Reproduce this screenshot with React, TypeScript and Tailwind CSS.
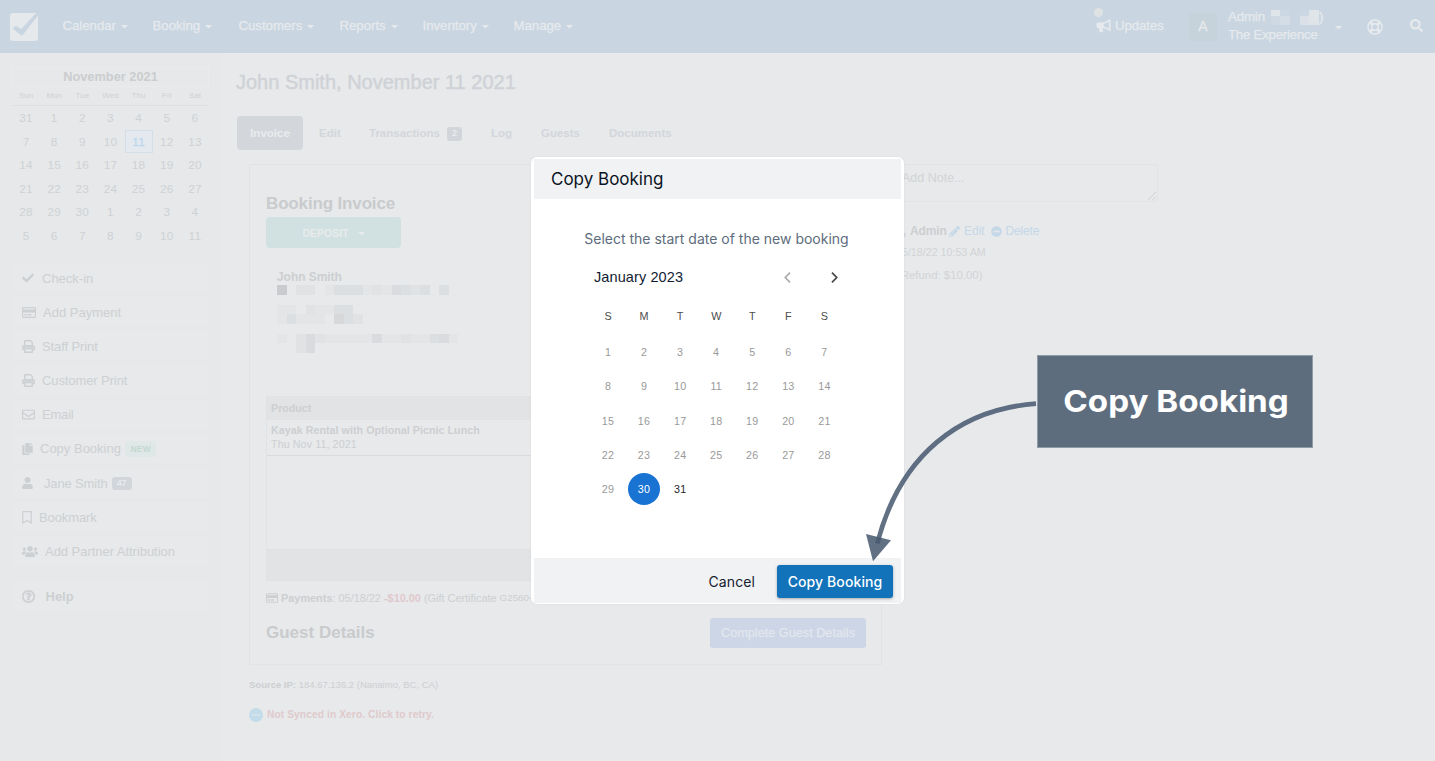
import type { ReactNode } from "react";
import clsx from "clsx";
import {
  FaCheck,
  FaCopy,
  FaMinusCircle,
  FaPencilAlt,
  FaRegBookmark,
  FaRegCreditCard,
  FaRegEnvelope,
  FaRegLifeRing,
  FaRegQuestionCircle,
  FaSearch,
  FaUser,
  FaUsers,
} from "react-icons/fa";

const NAV = [
  { label: "Calendar", width: "w-[90px]" },
  { label: "Booking", width: "w-[86px]" },
  { label: "Customers", width: "w-[101px]" },
  { label: "Reports", width: "w-[83px]" },
  { label: "Inventory", width: "w-[91px]" },
  { label: "Manage", width: "w-[80px]" },
];

const MINI_WEEKDAYS = ["Sun", "Mon", "Tue", "Wed", "Thu", "Fri", "Sat"];
const MINI_DAYS = [
  31, 1, 2, 3, 4, 5, 6, 7, 8, 9, 10, 11, 12, 13, 14, 15, 16, 17, 18, 19, 20, 21,
  22, 23, 24, 25, 26, 27, 28, 29, 30, 1, 2, 3, 4, 5, 6, 7, 8, 9, 10, 11,
];

const WEEKDAYS = ["S", "M", "T", "W", "T", "F", "S"];
const DAYS = Array.from({ length: 31 }, (_, i) => i + 1);

// Redacted contact lines, one opacity (0-9) per block
const REDACTED = [
  { rows: ["902201333121432303"], className: "mt-0" },
  { rows: ["110211330", "131110532"], className: "mt-[10px]" },
  { rows: ["1024211111411211341", "0024"], className: "mt-[10px]" },
];

function Caret({ className }: { className?: string }) {
  return (
    <svg viewBox="0 0 8 4" className={clsx("h-[3.5px] w-[7px]", className)} fill="currentColor">
      <path d="M0 0h8L4 4z" />
    </svg>
  );
}

function LogoIcon() {
  return (
    <svg viewBox="0 0 28 28" className="h-7 w-7">
      <rect width="28" height="28" rx="3" fill="#e6e9eb" />
      <path d="M2.5 15.5l3.3-2.7 5.500 3.200L25 1l3-1v2.500L12 23z" fill="#c9d6e2" />
    </svg>
  );
}

function MegaphoneIcon() {
  return (
    <svg viewBox="0 0 15 14" className="h-3.5 w-[15px]" fill="none" stroke="currentColor" strokeWidth="1.5" strokeLinejoin="round">
      <path d="M7 4.2C10 4 12 2.6 13.8 1.2v10.2C12 9.6 10 8.5 7 8.3" />
      <path d="M2.2 4.2H7v4.100H2.200a1 1 0 0 1-1-1V5.200a1 1 0 0 1 1-1zM3.600 8.400l.6 4.200h2L5.800 8.400z" fill="currentColor" />
    </svg>
  );
}

function PrintIcon() {
  return (
    <svg viewBox="0 0 13 13" className="h-[13px] w-[13px]" fill="none" stroke="currentColor" strokeWidth="1.4" strokeLinejoin="round">
      <path d="M2.7 5.5V.8h5.800l1.800 1.800v2.900" />
      <path d="M2.7 9.6H.8V7a1.300 1.300 0 0 1 1.300-1.300h8.800A1.300 1.300 0 0 1 12.200 7v2.600h-1.900" />
      <path d="M2.7 8.6h7.600v3.600H2.700zM1 7h11" />
    </svg>
  );
}

function TopBar() {
  return (
    <header className="flex h-[53px] shrink-0 items-center bg-[#c9d6e2] text-[13.2px] text-[#e7eaed]">
      <div className="w-[62.5px] pl-[10px]">
        <LogoIcon />
      </div>
      <nav className="flex flex-1 pb-px">
        {NAV.map((item) => (
          <div key={item.label} className={clsx("flex items-center", item.width)}>
            <span className="[-webkit-text-stroke:0.25px]">{item.label}</span>
            <Caret className="mt-[2px] ml-[5px]" />
          </div>
        ))}
      </nav>
      <div className="relative flex w-[93px] items-center gap-1 pb-px">
        <span className="absolute -top-[8px] -left-[2px] h-[9px] w-[9px] rounded-full bg-[#dfe2e2]" />
        <MegaphoneIcon />
        <span className="tracking-[-0.05px] [-webkit-text-stroke:0.25px]">Updates</span>
      </div>
      <div className="flex h-7 w-7 items-center justify-center rounded-[3px] bg-[#c7d3db] text-[14px] [-webkit-text-stroke:0.25px]">
        A
      </div>
      <div className="ml-[11px] w-[107px] pb-px leading-[18px] tracking-[-0.1px] [-webkit-text-stroke:0.25px]">
        <div className="flex items-center">
          Admin
          <span className="ml-[6px] flex h-[15px] w-[19px] flex-wrap content-start">
            <i className="h-[6px] w-[9.5px] bg-[#e0e5ea]" />
            <i className="h-[6px] w-[9.5px] bg-[#cbd7e2]" />
            <i className="h-[9px] w-[9.5px] bg-[#cfd9e3]" />
            <i className="h-[9px] w-[9.5px] bg-[#d4dde5]" />
          </span>
          <span className="ml-[10px] flex h-[15px] w-[19px] flex-wrap content-start">
            <i className="h-[6px] w-[9.5px] bg-[#cbd7e2]" />
            <i className="h-[6px] w-[9.5px] bg-[#e0e5ea]" />
            <i className="h-[9px] w-[9.5px] bg-[#d9e0e7]" />
            <i className="h-[9px] w-[9.5px] bg-[#dfe4e9]" />
          </span>
          <span>)</span>
        </div>
        <div className="tracking-[-0.2px]">The Experience</div>
      </div>
      <Caret className="mt-[2px]" />
      <FaRegLifeRing className="ml-[25px] h-4 w-4" />
      <FaSearch className="mr-[12px] mb-[2px] ml-[27px] h-[13px] w-[13px]" />
    </header>
  );
}

function MiniCalendar() {
  return (
    <div className="w-[197px] text-[#cfd2d4]">
      <div className="h-[20px] border border-[#e9ebec] text-center text-[12.8px] leading-[18px] font-bold text-[#cbcdcf]">
        November 2021
      </div>
      <div className="grid h-[19px] grid-cols-7 border-b border-[#dee0e3] text-center text-[8px] leading-[17px]">
        {MINI_WEEKDAYS.map((d) => (
          <span key={d}>{d}</span>
        ))}
      </div>
      <div className="grid grid-cols-7 text-center text-[11.8px] leading-[24px] tracking-[0.2px]">
        {MINI_DAYS.map((d, i) => (
          <span
            key={i}
            className={clsx(
              "h-[23.5px]",
              i === 11 &&
                "border border-[#d2dfe9] bg-[#e3e9ee] leading-[22px] text-[#bed7ed] [-webkit-text-stroke:0.3px]"
            )}
          >
            {d}
          </span>
        ))}
      </div>
    </div>
  );
}

function MenuItem({ icon, gap, children }: { icon: ReactNode; gap: string; children: ReactNode }) {
  return (
    <div className="flex h-[29px] items-center rounded-[3px] bg-[#e7e9eb] pt-px pl-[10px] text-[13px] leading-none text-[#cdd0d2]">
      {icon}
      <span className={clsx("flex items-center", gap)}>{children}</span>
    </div>
  );
}

function Sidebar() {
  return (
    <aside className="w-[222px] shrink-0 bg-[#e6e8ea] pt-[14px] pl-[12px]">
      <MiniCalendar />
      <div className="mt-[16px] flex w-[197px] flex-col gap-[5.2px]">
        <MenuItem icon={<FaCheck className="h-3 w-3" />} gap="ml-[8px]">Check-in</MenuItem>
        <MenuItem icon={<FaRegCreditCard className="h-[13px] w-[14px]" />} gap="ml-[7px]">Add Payment</MenuItem>
        <MenuItem icon={<PrintIcon />} gap="ml-[7px] tracking-[-0.1px]">Staff Print</MenuItem>
        <MenuItem icon={<PrintIcon />} gap="ml-[7px] tracking-[-0.1px]">Customer Print</MenuItem>
        <MenuItem icon={<FaRegEnvelope className="h-[13px] w-[13px]" />} gap="ml-[7px] tracking-[-0.2px]">Email</MenuItem>
        <MenuItem icon={<FaCopy className="h-3 w-[11px]" />} gap="ml-[7px]">
          Copy Booking
          <span className="ml-1 flex h-4 items-center rounded-[3px] bg-[#e0e7e7] px-[5.5px] text-[8.5px] font-bold tracking-[0.2px] text-[#c3d9d0]">
            NEW
          </span>
        </MenuItem>
        <MenuItem icon={<FaUser className="h-3 w-[11px]" />} gap="ml-[11px] tracking-[-0.15px]">
          Jane Smith
          <span className="ml-1 flex h-[13px] w-5 items-center justify-center rounded-[3px] bg-[#d2d5da] text-[9px] font-bold text-[#e8eaec]">
            47
          </span>
        </MenuItem>
        <MenuItem icon={<FaRegBookmark className="h-[13px] w-[10px]" />} gap="ml-[7px] tracking-[-0.1px]">Bookmark</MenuItem>
        <MenuItem icon={<FaUsers className="h-[15px] w-[16px]" />} gap="ml-[7px] tracking-[-0.04px]">Add Partner Attribution</MenuItem>
      </div>
      <div className="mt-[16px] w-[197px]">
        <MenuItem icon={<FaRegQuestionCircle className="h-[13px] w-[13px]" stroke="currentColor" strokeWidth="24" />} gap="ml-[10.5px] font-bold">
          Help
        </MenuItem>
      </div>
    </aside>
  );
}

function Tabs() {
  return (
    <div className="mt-[21px] ml-[15px] flex h-[34px] items-center text-[11.5px] font-bold text-[#d3d6db]">
      <div className="flex h-full w-[66px] items-center justify-center rounded-[4px] bg-[#d3d7dc] pt-px text-[#e9ebed]">
        Invoice
      </div>
      <span className="mt-[2px] ml-[16px] w-[50px]">Edit</span>
      <span className="mt-[2px] flex w-[122px] items-center">
        Transactions
        <span className="ml-[7px] flex h-[14px] w-[15px] items-center justify-center rounded-[3px] bg-[#d2d6db] text-[9px] text-[#e9ebed]">
          2
        </span>
      </span>
      <span className="mt-[2px] w-[50px]">Log</span>
      <span className="mt-[2px] w-[68px]">Guests</span>
      <span className="mt-[2px]">Documents</span>
    </div>
  );
}

function RedactedText() {
  return (
    <>
      {REDACTED.map((group, g) => (
        <div key={g} className={group.className}>
          {group.rows.map((row, r) => (
            <div key={r} className="flex">
              {row.split("").map((level, i) => (
                <i
                  key={i}
                  className="h-[9.5px] w-[9.55px] bg-[#b4b6b8]"
                  style={{ opacity: Number(level) * 0.065 }}
                />
              ))}
            </div>
          ))}
        </div>
      ))}
    </>
  );
}

function InvoicePanel() {
  return (
    <section className="h-[501px] w-[633px] border border-[#e1e3e5] pt-[27px] pr-[15px] pl-[16px] text-[#cdcfd1]">
      <h2 className="text-[17px] leading-[23px] font-bold tracking-[-0.15px] text-[#c9cbcd]">Booking Invoice</h2>
      <div className="mt-[2px] flex h-[31px] w-[135px] items-center justify-center rounded-[4px] bg-[#d1e0e0] pt-[2px] text-[10.5px] font-bold text-[#e8ebec]">
        DEPOSIT
        <Caret className="ml-[9px]" />
      </div>
      <div className="mt-[21px] h-[127px] pl-[11px]">
        <div className="pt-px text-[12px] leading-[15px] font-bold tracking-[-0.05px]">John Smith</div>
        <RedactedText />
      </div>
      <div className="h-[185px] border border-[#e0e2e4] text-[10.7px]">
        <div className="h-[23px] bg-[#e2e3e5] pl-[4px] leading-[22px] font-bold">Product</div>
        <div className="h-[36px] border-b border-[#d9dbde] pt-[4px] pl-[4px] leading-[13.5px]">
          <div className="font-bold tracking-[0.04px]">Kayak Rental with Optional Picnic Lunch</div>
          <div className="tracking-[0.1px]">Thu Nov 11, 2021</div>
        </div>
        <div className="h-[93px]" />
        <div className="h-[31px] border-t border-[#dfe1e3] bg-[#e2e3e5]" />
      </div>
      <div className="mt-[8px] flex h-[18px] items-center text-[10.9px] whitespace-pre">
        <FaRegCreditCard className="mr-[3px] h-3 w-3" />
        <b>Payments</b>
        {": 05/18/22 "}
        <b className="text-[#e1c8cb]">-$10.00</b>
        {" (Gift Certificate "}
        <span className="text-[9.8px]">G2560-A)</span>
      </div>
      <div className="mt-[11px] flex items-center justify-between">
        <h2 className="text-[17px] font-bold text-[#c9cbcd]">Guest Details</h2>
        <div className="flex h-[30px] w-[156px] items-center justify-center rounded-[3px] bg-[#cdd6e7] pt-px text-[12.7px] text-[#e3e7ee] [-webkit-text-stroke:0.25px]">
          Complete Guest Details
        </div>
      </div>
    </section>
  );
}

function Notes() {
  return (
    <section className="w-[263.5px] text-[#d2d4d6]">
      <div className="flex h-[38px] items-start justify-between rounded-[3px] border border-[#e1e3e5] pt-[5px] pl-[7px] text-[12.5px]">
        <span className="leading-[17px]">Add Note...</span>
        <svg viewBox="0 0 8 8" className="mt-[22px] mr-[1px] h-2 w-2" stroke="#cfd1d3">
          <path d="M0 8l8-8M4.5 8L8 4.5" />
        </svg>
      </div>
      <div className="mt-[20px] flex items-center pl-[9px] text-[12px] leading-[18px]">
        <b className="w-[7px]">,</b>
        <b className="w-[39px] tracking-[-0.1px] text-[#cdcfd1]">Admin</b>
        <span className="flex items-center text-[#c5d8e8]">
          <FaPencilAlt className="h-[11px] w-[11px]" />
          <span className="ml-[4px] w-[27px]">Edit</span>
          <FaMinusCircle className="h-[11px] w-[11px]" />
          <span className="ml-[3.5px] tracking-[-0.15px]">Delete</span>
        </span>
      </div>
      <div className="mt-[5px] pl-[2px] text-[10.7px] leading-[15px]">05/18/22 10:53 AM</div>
      <div className="mt-[7px] pl-[3px] text-[11.4px] leading-[16px]">(Refund: $10.00)</div>
    </section>
  );
}

function DatePicker() {
  return (
    <div className="mt-[18px] ml-[56px] w-[252.5px] font-['Liberation_Sans',sans-serif]">
      <div className="flex h-[20px] items-center pl-[4px]">
        <span className="w-[190px] pt-[2px] text-[14.5px] tracking-[0.1px] text-[#111c33]">January 2023</span>
        <svg viewBox="0 0 6 10" className="h-[11px] w-[7px]" fill="none" stroke="#a9a9a9" strokeWidth="1.5">
          <path d="M5.3.6L1 5l4.300 4.400" />
        </svg>
        <svg viewBox="0 0 6 10" className="ml-[40px] h-[11px] w-[7px]" fill="none" stroke="#4a4a4a" strokeWidth="1.6">
          <path d="M.7.6L5 5 .7 9.400" />
        </svg>
      </div>
      <div className="mt-[19px] grid h-[20px] grid-cols-7 items-center text-center text-[10.8px] text-[#4d4d4d]">
        {WEEKDAYS.map((d, i) => (
          <span key={i}>{d}</span>
        ))}
      </div>
      <div className="mt-[9px] grid auto-rows-[34.25px] grid-cols-7 text-[10.7px] tracking-[0.3px] text-[#999]">
        {DAYS.map((d) => (
          <div key={d} className="flex items-center justify-center">
            <span
              className={clsx(
                "flex h-8 w-8 shrink-0 items-center justify-center rounded-full",
                d === 30 && "bg-[#1873d3] text-white",
                d === 31 && "text-[#222]"
              )}
            >
              {d}
            </span>
          </div>
        ))}
      </div>
    </div>
  );
}

function CopyBookingDialog() {
  return (
    <div className="absolute inset-0 flex items-center justify-center">
      <div
        role="dialog"
        className="flex h-[447px] w-[373px] flex-col rounded-[6px] border-x-[3px] border-t-2 border-b border-white bg-white font-[Inter,sans-serif] shadow-[0_0_2px_rgba(0,0,0,0.08)]"
      >
        <div className="flex h-[40px] items-center bg-[#f1f2f4] pt-px pl-[17px] text-[17px] text-[#0b1424]">
          Copy Booking
        </div>
        <div className="flex-1">
          <div className="mt-[30px] pr-[2px] text-center text-[14px] leading-[20px] text-[#5d6c7d]">
            Select the start date of the new booking
          </div>
          <DatePicker />
        </div>
        <div className="flex h-[45px] items-center justify-end bg-[#f1f2f4] pt-px pr-[8px] text-[14px]">
          <span className="mr-[22px] tracking-[0.1px] text-[#16202f]">Cancel</span>
          <button className="h-[33px] w-[116px] rounded-[3px] bg-[#1273ba] font-medium tracking-[0.1px] text-white shadow-[0_1px_3px_rgba(0,0,0,0.3)]">
            Copy Booking
          </button>
        </div>
      </div>
    </div>
  );
}

function Callout() {
  return (
    <>
      <svg viewBox="0 0 180 170" className="absolute top-[397px] left-[860px] h-[170px] w-[180px]">
        <path d="M176 6.7C100 12 40 58 17.3 146.5" fill="none" stroke="#495b70" strokeWidth="4.8" strokeOpacity="0.87" />
        <path d="M6 137l25 6.300-18 21z" fill="#495b70" fillOpacity="0.87" />
      </svg>
      <div className="absolute top-[355px] left-[1037px] flex h-[93px] w-[276px] items-center justify-center border border-[#8f9ba7] bg-[#5e6d7e] font-[Inter,sans-serif] text-[30px] font-bold text-white">
        <span className="scale-x-[1.105] pl-px whitespace-nowrap">Copy Booking</span>
      </div>
    </>
  );
}

export default function App() {
  return (
    <div className="relative flex h-[761px] w-[1435px] flex-col overflow-hidden bg-[#e7e9eb] font-['Liberation_Sans',Arial,sans-serif]">
      <TopBar />
      <div className="flex min-h-0 flex-1">
        <Sidebar />
        <main className="flex-1">
          <h1 className="mt-[16px] ml-[14px] text-[20px] leading-[26px] text-[#cfd2d6] [-webkit-text-stroke:0.4px]">
            John Smith, November 11 2021
          </h1>
          <Tabs />
          <div className="mt-[14px] ml-[27px] flex gap-[12px]">
            <InvoicePanel />
            <Notes />
          </div>
          <div className="mt-[13px] ml-[27px] text-[9.5px] leading-[14px] text-[#cdcfd1]">
            <b>Source IP:</b> 184.67.136.2 (Nanaimo, BC, CA)
          </div>
          <div className="mt-[16px] ml-[27px] flex items-center gap-[4px] text-[10.2px] leading-[14px] font-bold tracking-[0.1px] text-[#dfc9cc]">
            <span className="flex h-[14px] w-[14px] items-center justify-center rounded-full bg-[#c3dce9] text-[4px] text-[#dfe9ef]">
              xero
            </span>
            Not Synced in Xero. Click to retry.
          </div>
        </main>
      </div>
      <CopyBookingDialog />
      <Callout />
    </div>
  );
}
